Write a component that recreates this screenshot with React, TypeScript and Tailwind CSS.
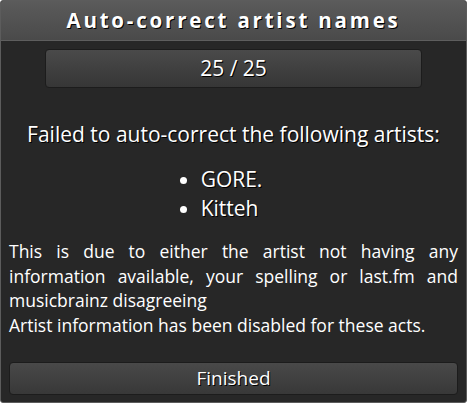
const artists = ["GORE.", "Kitteh"];

const App = () => {
  return (
    <div
      className="flex h-[403px] w-[467px] flex-col overflow-hidden rounded-[3px] border border-[#5c5c5c] bg-[#272727] text-white"
      style={{ fontFamily: '"Open Sans", "Noto Sans", sans-serif' }}
    >
      <div className="flex h-[40px] shrink-0 items-center justify-center border-b border-[#5e5e5e] bg-gradient-to-b from-[#5b5b5b] to-[#4a4a4a]">
        <h1 className="text-[20.5px] font-bold tracking-[2.8px] [text-shadow:1px_1px_0_#000]">
          Auto-correct artist names
        </h1>
      </div>
      <div className="flex flex-1 flex-col px-[8px]">
        <div className="mx-auto mt-[8px] flex h-[39px] w-[377px] items-center justify-center rounded-[4px] border border-[#1c1c1c] bg-gradient-to-b from-[#4a4a4a] to-[#363636] text-[21px] [text-shadow:1px_1px_0_#000]">
          25 / 25
        </div>
        <p className="mt-[32px] text-center text-[21px] leading-[28px] [text-shadow:1px_1px_0_#000]">
          Failed to auto-correct the following artists:
        </p>
        <ul className="mx-auto mt-[17px] list-disc pl-[20px] pr-[24px] text-[21px] leading-[29px] [text-shadow:1px_1px_0_#000]">
          {artists.map((artist) => (
            <li key={artist}>{artist}</li>
          ))}
        </ul>
        <p className="mt-[16px] text-justify text-[17.5px] leading-[24.5px]">
          This is due to either the artist not having any information available,
          your spelling or last.fm and musicbrainz disagreeing
          <br />
          Artist information has been disabled for these acts.
        </p>
        <button className="mt-auto mb-[7px] h-[33px] w-full rounded-[4px] border border-[#1c1c1c] bg-gradient-to-b from-[#494949] to-[#383838] text-[19px] [text-shadow:1px_1px_0_#000]">
          Finished
        </button>
      </div>
    </div>
  );
};

export default App;
